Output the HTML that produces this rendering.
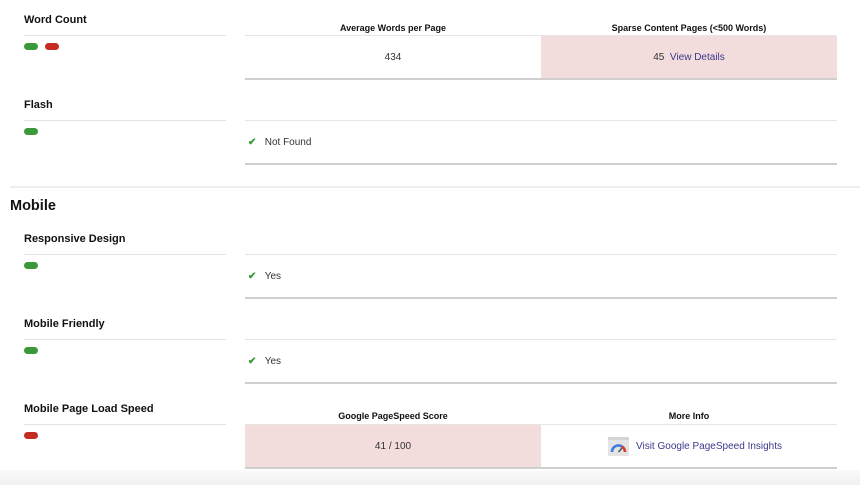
<!DOCTYPE html>
<html><head><meta charset="utf-8"><style>
body{margin:0;width:860px;height:485px;position:relative;background:#fff;font-family:"Liberation Sans",Arial,sans-serif;overflow:hidden}
.a{position:absolute}
.h{font-weight:bold;font-size:11px;color:#111;left:24px}
.ll{left:24px;width:202px;height:1px;background:#e2e2e2}
.tl{left:245px;width:592px;height:1px;background:#e6e6e6}
.bl{left:245px;width:592px;height:2px;background:#cfcfcf}
.p{width:14px;height:7px;border-radius:4px}
.g{background:#3a9a3a}.r{background:#c62b22}
.th{font-weight:bold;font-size:9px;color:#111;text-align:center;width:296px}
.t{font-size:10px;color:#333}
.pink{background:#f2dcdc}
.ck{color:#3a9a3a;font-size:10px;font-weight:bold}
a{color:#3c3a8e;text-decoration:none}
</style></head><body>
<div class="a h" style="top:14px">Word Count</div>
<div class="a ll" style="top:35px"></div>
<div class="a p g" style="left:24px;top:43px"></div>
<div class="a p r" style="left:45px;top:43px"></div>
<div class="a th" style="left:245px;top:23px">Average Words per Page</div>
<div class="a th" style="left:541px;top:23px">Sparse Content Pages (&lt;500 Words)</div>
<div class="a tl" style="top:35px"></div>
<div class="a pink" style="left:541px;top:36px;width:296px;height:43px"></div>
<div class="a t" style="left:245px;width:296px;text-align:center;top:52px">434</div>
<div class="a t" style="left:541px;width:296px;text-align:center;top:52px">45&nbsp;&nbsp;<a>View Details</a></div>
<div class="a bl" style="top:78px"></div>

<div class="a h" style="top:99px">Flash</div>
<div class="a ll" style="top:120px"></div>
<div class="a p g" style="left:24px;top:128px"></div>
<div class="a tl" style="top:120px"></div>
<div class="a t" style="left:248px;top:137px"><span class="ck">✔</span>&nbsp;&nbsp;&nbsp;Not Found</div>
<div class="a bl" style="top:163px"></div>

<div class="a" style="left:10px;top:186px;width:850px;height:2px;background:#eee"></div>
<div class="a" style="left:10px;top:198px;font-weight:bold;font-size:14.5px;color:#111">Mobile</div>

<div class="a h" style="top:233px">Responsive Design</div>
<div class="a ll" style="top:254px"></div>
<div class="a p g" style="left:24px;top:262px"></div>
<div class="a tl" style="top:254px"></div>
<div class="a t" style="left:248px;top:271px"><span class="ck">✔</span>&nbsp;&nbsp;&nbsp;Yes</div>
<div class="a bl" style="top:297px"></div>

<div class="a h" style="top:318px">Mobile Friendly</div>
<div class="a ll" style="top:339px"></div>
<div class="a p g" style="left:24px;top:347px"></div>
<div class="a tl" style="top:339px"></div>
<div class="a t" style="left:248px;top:356px"><span class="ck">✔</span>&nbsp;&nbsp;&nbsp;Yes</div>
<div class="a bl" style="top:382px"></div>

<div class="a h" style="top:403px">Mobile Page Load Speed</div>
<div class="a ll" style="top:424px"></div>
<div class="a p r" style="left:24px;top:432px"></div>
<div class="a th" style="left:245px;top:411px">Google PageSpeed Score</div>
<div class="a th" style="left:541px;top:411px">More Info</div>
<div class="a tl" style="top:424px"></div>
<div class="a pink" style="left:245px;top:425px;width:296px;height:43px"></div>
<div class="a t" style="left:245px;width:296px;text-align:center;top:441px">41 / 100</div>
<svg class="a" style="left:608px;top:437px" width="21" height="19" viewBox="0 0 21 19"><rect width="21" height="19" rx="1" fill="#e4e4e4"/><rect width="21" height="3" fill="#d4d4d4"/><path d="M4 15 A6.5 6.5 0 0 1 14 9.5" stroke="#3d7be0" stroke-width="2.6" fill="none"/><path d="M14 9.5 A6.5 6.5 0 0 1 17 15" stroke="#d83b2c" stroke-width="2.6" fill="none"/><path d="M10.5 15 L14 11" stroke="#555" stroke-width="1.6"/></svg>
<div class="a t" style="left:636px;top:441px"><a>Visit Google PageSpeed Insights</a></div>
<div class="a bl" style="top:467px"></div>
<div class="a" style="left:0;top:470px;width:860px;height:15px;background:linear-gradient(#fafafa,#f0f0f0)"></div>
</body></html>
